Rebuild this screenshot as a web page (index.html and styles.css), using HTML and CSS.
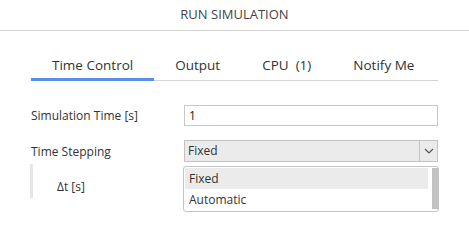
FILE: index.html
```html
<!DOCTYPE html>
<html lang="en">
<head>
  <meta charset="UTF-8" />
  <title>Run Simulation</title>
  <link rel="stylesheet" href="styles.css">
</head>
<body>
  <header class="title">RUN SIMULATION</header>

  <nav class="tabs">
    <a class="tab active">Time Control</a>
    <a class="tab">Output</a>
    <a class="tab">CPU&nbsp;&nbsp;(1)</a>
    <a class="tab">Notify Me</a>
  </nav>

  <div class="form">
    <div class="row">
      <label class="label">Simulation Time [s]</label>
      <div class="input">1</div>
    </div>

    <div class="row row-select">
      <label class="label">Time Stepping</label>
      <div class="select">
        <span class="select-value">Fixed</span>
        <span class="select-arrow">
          <svg width="10" height="6" viewBox="0 0 10 6"><path d="M1 1 L5 5 L9 1" fill="none" stroke="#555" stroke-width="1.2"/></svg>
        </span>
        <!-- open dropdown -->
        <div class="dropdown">
          <ul class="options">
            <li class="option selected">Fixed</li>
            <li class="option">Automatic</li>
          </ul>
          <div class="scrollbar"></div>
        </div>
      </div>
    </div>

    <div class="row row-sub">
      <div class="sub-bar"></div>
      <label class="sub-label">&Delta;t [s]</label>
    </div>
  </div>
</body>
</html>
```

FILE: styles.css
```css
* {
  margin: 0;
  padding: 0;
  box-sizing: border-box;
}

html, body {
  min-height: 240px;
}

body {
  font-family: "Open Sans", "Noto Sans", sans-serif;
  font-size: 12px;
  color: #333;
  background-color: #fff;
}

.title {
  height: 31px;
  border-bottom: 1px solid #d4d4d4;
  text-align: center;
  font-size: 13px;
  line-height: 29px;
  color: #444;
}

/* tabs */
.tabs {
  display: flex;
  width: 407px;
  margin: 20px 0 0 31px;
  box-shadow: inset 0 -1px 0 #d4d4d4;
}
.tab {
  padding: 6px 21px 4px;
  line-height: 17px;
  font-size: 13.5px;
  color: #333;
  border-bottom: 3px solid transparent;
  cursor: pointer;
}
.tab.active {
  border-bottom-color: #5b8ee6;
}

/* form */
.form {
  padding: 24px 31px 40px;
}
.row {
  display: flex;
  align-items: center;
}
.row-select {
  margin-top: 14px;
}
.row-sub {
  margin-top: 2px;
  height: 34px;
  align-items: stretch;
}
.label {
  width: 153px;
  flex-shrink: 0;
}
.sub-bar {
  width: 3px;
  margin-left: -1px;
  background-color: #e6e6e6;
}
.sub-label {
  padding: 12px 0 0 24px;
  line-height: 22px;
}

.input {
  width: 254px;
  height: 21px;
  border: 1px solid #c8c8c8;
  padding-left: 4px;
  line-height: 19px;
  color: #222;
}

.select {
  position: relative;
  display: flex;
  width: 254px;
  height: 22px;
  border: 1px solid #c3c3c3;
  background-color: #ebebeb;
}
.select-value {
  flex: 1;
  padding-left: 3px;
  line-height: 20px;
}
.select-arrow {
  width: 18px;
  border-left: 1px solid #c3c3c3;
  display: flex;
  align-items: center;
  justify-content: center;
}

.dropdown {
  position: absolute;
  top: 25px;
  left: -2px;
  width: 256px;
  height: 46px;
  display: flex;
  padding: 1px 0 1px 1px;
  border: 1px solid #c4c4c4;
  border-radius: 3px;
  background-color: #fff;
  z-index: 10;
}
.options {
  list-style: none;
  width: 243px;
}
.option {
  height: 21px;
  line-height: 21px;
  padding-left: 4px;
}
.option.selected {
  background-color: #ebebeb;
}
.scrollbar {
  width: 6px;
  height: 41px;
  margin-left: 4px;
  background-color: #c2c2c2;
}
```
